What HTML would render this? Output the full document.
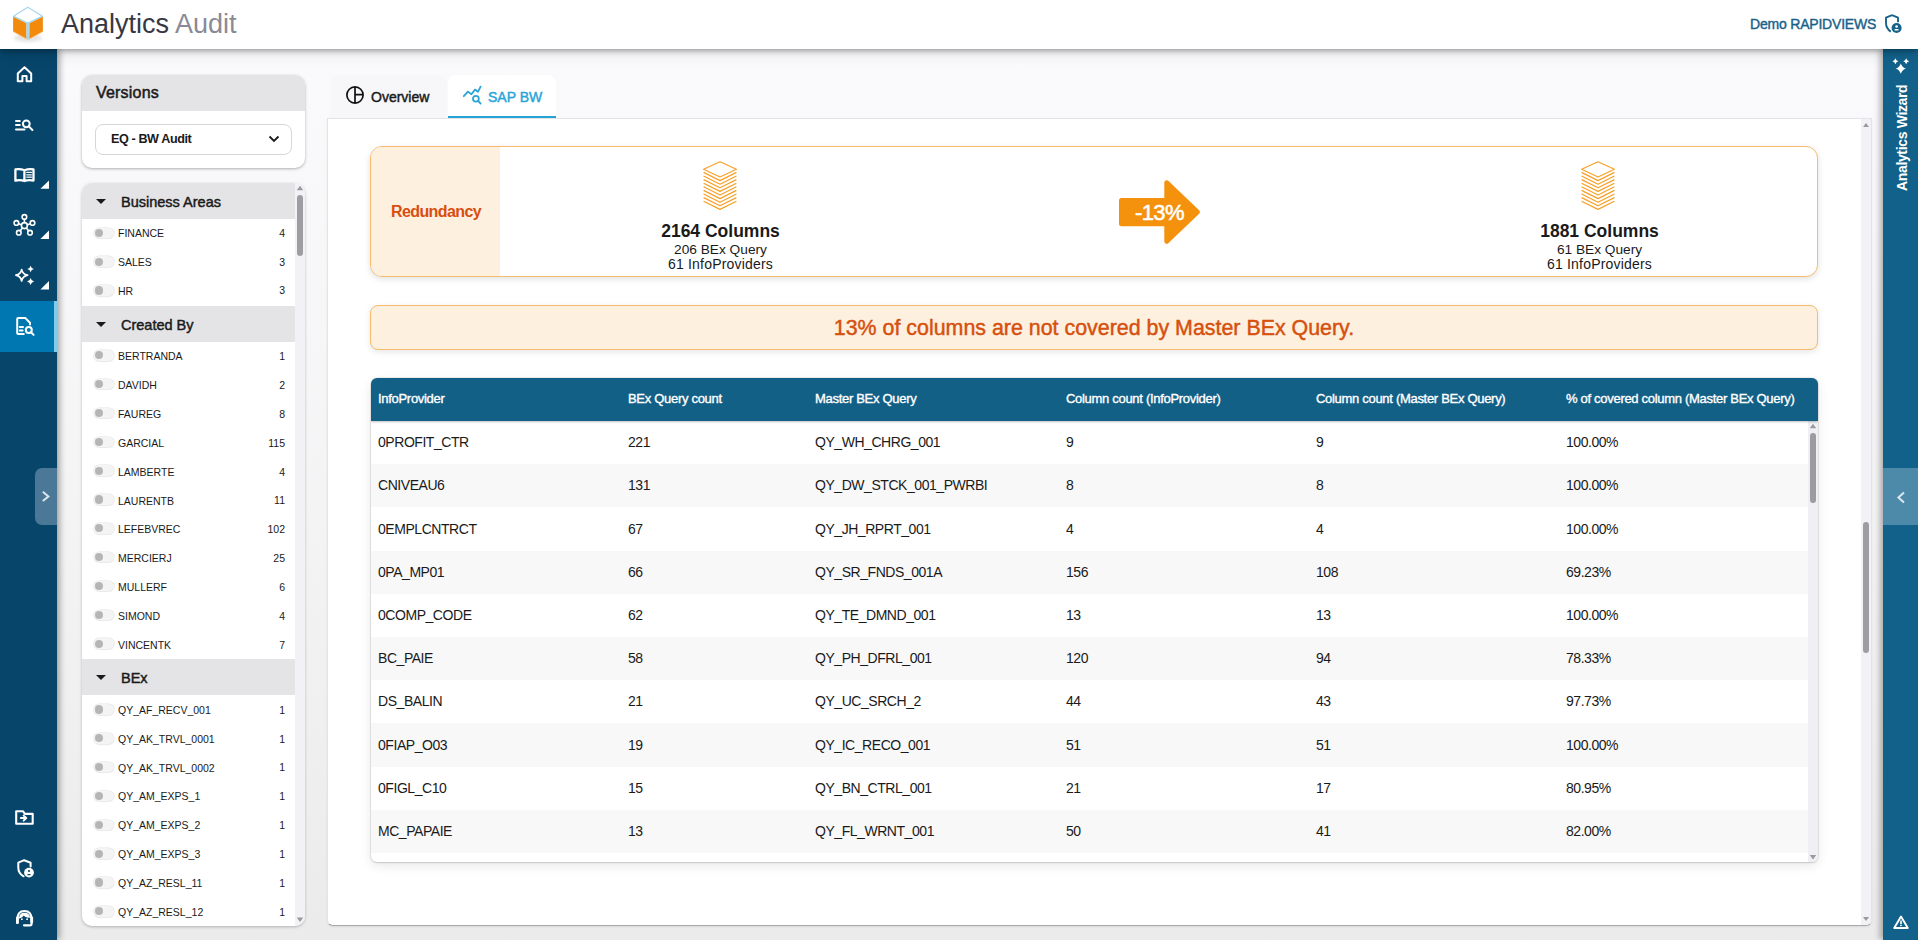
<!DOCTYPE html>
<html><head><meta charset="utf-8">
<style>
*{box-sizing:border-box;margin:0;padding:0}
html,body{width:1918px;height:940px;overflow:hidden;font-family:"Liberation Sans",sans-serif;background:linear-gradient(#fafafc 60px,#f4f4f5 500px,#ebebeb 940px);color:#1a1a1a}
.abs{position:absolute}
#hdr{position:absolute;left:0;top:0;width:1918px;height:49px;background:#fff;box-shadow:0 2px 5px rgba(0,0,0,.3),0 4px 14px rgba(0,0,0,.12);z-index:5}
#lsb{position:absolute;left:0;top:49px;width:57px;height:891px;background:#07456a;z-index:4;box-shadow:2px 0 7px rgba(0,0,0,.4)}
#rsb{position:absolute;left:1883px;top:49px;width:35px;height:891px;background:#12618a;z-index:4;box-shadow:-3px 0 6px rgba(0,0,0,.3)}
.card{position:absolute;background:#fff;border-radius:10px;box-shadow:0 1px 3px rgba(0,0,0,.3)}
.ico{position:absolute;left:14px;width:22px;height:22px}
.ico svg{width:22px;height:22px;display:block}
.corner{position:absolute;width:0;height:0;border-left:9px solid transparent;border-bottom:9px solid #fff}
/* facets */
#fac{position:absolute;left:82px;top:183px;width:223px;height:743px;background:#fff;border-radius:10px;box-shadow:0 1px 3px rgba(0,0,0,.25);overflow:hidden}
.fh{position:relative;width:213px;height:36px;background:#e4e4e6;font-size:14.5px;-webkit-text-stroke:0.45px #1a1a1a;padding:11px 0 0 39px;color:#1a1a1a}
.car{position:absolute;left:14px;top:16px;width:0;height:0;border-left:5px solid transparent;border-right:5px solid transparent;border-top:5px solid #1a1a1a}
.fr{position:relative;width:213px;height:28.85px;font-size:10.5px;color:#1a1a1a}
.s2 .fn,.s2 .fc{margin-top:0.8px}
.s3 .fn,.s3 .fc{margin-top:1.1px}
.s3 .tg{margin-top:0.9px}
.tg{position:absolute;left:12px;top:8.5px;width:20px;height:10.5px;border-radius:5.25px;background:#f4f4f4;box-shadow:0 0 0 0.6px #e4e4e4,0 1px 1px rgba(0,0,0,.06)}
.tg:before{content:"";position:absolute;left:1px;top:1.2px;width:8.2px;height:8.2px;border-radius:50%;background:#b5b5b5}
.fn{position:absolute;left:36px;top:8px}
.fc{position:absolute;right:10px;top:7.8px}
/* tabs */
.tab{position:absolute;top:75px;height:43px;font-size:14px;-webkit-text-stroke:0.45px currentColor}
/* table */
#tbl{position:absolute;left:371px;top:378px;width:1447px;height:484px;background:#fff;border-radius:6px;box-shadow:0 4px 12px rgba(0,0,0,.09),0 1px 2px rgba(0,0,0,.12),0 0 0 1px rgba(0,0,0,.06);overflow:hidden}
.th{position:absolute;left:0;top:0;width:1447px;height:43px;box-shadow:0 1px 2px rgba(0,0,0,.25);z-index:2;background:#136087;color:#fff;font-size:13px;letter-spacing:-0.3px;-webkit-text-stroke:0.35px #fff}
.th span{position:absolute;top:12.6px}
.tr{position:relative;width:1437px;height:43.2px;font-size:14px;letter-spacing:-0.45px;background:#fff}
.tr.alt{background:#f8f8f9}
.tr span{position:absolute;top:13.2px;white-space:nowrap}
.th span{white-space:nowrap}
.c1{left:7px}.c2{left:257px}.c3{left:444px}.c4{left:695px}.c5{left:945px}.c6{left:1195px}
</style></head>
<body>
<div id="hdr">
  <svg class="abs" style="left:0;top:0" width="60" height="49" viewBox="0 0 60 49">
    <defs><filter id="sh" x="-30%" y="-30%" width="160%" height="160%"><feGaussianBlur stdDeviation="1.6"/></filter></defs>
    <ellipse cx="28" cy="38" rx="14" ry="4" fill="rgba(0,0,0,.10)" filter="url(#sh)"/>
    <polygon points="13.1,16.2 26.5,23.3 26.5,39.6 13.1,31.8" fill="#f28b0c"/>
    <polygon points="42.9,16.2 29.3,23.3 29.3,39.6 42.9,31.8" fill="#f28b0c"/>
    <rect x="26.5" y="22.8" width="2.8" height="16.8" fill="#a6d8ef"/>
    <polygon points="27.8,7.3 42.6,16.2 27.8,23.2 13.4,16.2" fill="#fff" stroke="#a6d8ef" stroke-width="1.3" stroke-linejoin="round"/>
    <polyline points="13.6,31.8 27,39.4" stroke="#fbd2a0" stroke-width="1" fill="none"/>
    <polyline points="29,39.4 42.6,31.8" stroke="#fbd2a0" stroke-width="1" fill="none"/>
  </svg>
  <div class="abs" style="left:61px;top:8px;font-size:27px;line-height:32px;color:#383844">Analytics <span style="color:#8a8a96">Audit</span></div>
  <div class="abs" style="left:1750px;top:16px;font-size:14px;line-height:16px;-webkit-text-stroke:0.4px #17628a;letter-spacing:-0.2px;color:#17628a">Demo RAPIDVIEWS</div>
  <svg class="abs" style="left:1879px;top:10px" width="26" height="26" viewBox="1880 10 26 26">
    <path d="M1893,15.2 L1899,17.6 V22.3 M1891.8,31.6 C1888.6,29.6 1887,26.8 1887,23 V17.6 L1893,15.2" fill="none" stroke="#17628a" stroke-width="1.9" stroke-linejoin="round"/>
    <circle cx="1897.6" cy="28" r="5" fill="#17628a"/>
    <circle cx="1897.6" cy="26.5" r="1.3" fill="#fff"/>
    <rect x="1895.6" y="29" width="4" height="1.6" rx=".6" fill="#fff"/>
  </svg>
</div>

<div id="lsb">
  <div class="abs" style="left:0;top:252px;width:57px;height:51px;background:#0077b0;border-right:3px solid #80cde9"></div>
  <div class="abs" style="left:35px;top:419px;width:22px;height:57px;background:#4a7896;border-radius:7px 0 0 7px"></div>
  <svg class="abs" style="left:0;top:0" width="57" height="891" viewBox="0 49 57 891">
   <g fill="none" stroke="#fff" stroke-width="2" stroke-linejoin="round" stroke-linecap="round">
    <!-- home -->
    <path d="M17.8,73.5 L24.5,67.3 L31.2,73.5 V81.3 H26.6 V76 H22.4 V81.3 H17.8 Z"/>
    <!-- search list -->
    <path d="M16,121.1 H19.8 M16,124.9 H19.8 M16,129.6 H24.5" stroke-width="2"/>
    <circle cx="26.3" cy="123.8" r="3.4"/>
    <path d="M28.8,126.4 L32.4,130"/>
    <!-- book -->
    <path d="M15.4,169.4 Q20,168.4 24.4,170.3 Q29,168.4 33.5,169.4 V180.6 Q29,179.4 24.4,181 Q20,179.4 15.4,180.6 Z M24.4,170.3 V181" stroke-width="2.3"/>
    <path d="M26.8,172.4 H31.4 M26.8,174.8 H31.4 M26.8,177.2 H31.4" stroke-width="1.3"/>
    <!-- network -->
    <g stroke-width="1.6">
     <circle cx="24.4" cy="225.6" r="3"/>
     <circle cx="24.4" cy="216.9" r="2.3"/>
     <circle cx="16.4" cy="222.9" r="2.3"/>
     <circle cx="32.5" cy="222.9" r="2.3"/>
     <circle cx="18.8" cy="232.7" r="2.3"/>
     <circle cx="30" cy="232.7" r="2.3"/>
     <path d="M24.4,219.2 V222.6 M18.6,223.7 L21.5,224.7 M30.3,223.7 L27.3,224.7 M20.2,230.8 L22.5,228 M28.6,230.8 L26.3,228"/>
    </g>
    <!-- sparkles -->
    <path d="M21.65,269.6 Q22.6,274.2 27.6,275.2 Q22.6,276.2 21.65,281 Q20.7,276.2 15.9,275.2 Q20.7,274.2 21.65,269.6 Z" stroke-width="1.7"/>
   </g>
   <g fill="#fff">
    <path d="M30.6,265.8 Q31.1,268.5 34,269 Q31.1,269.5 30.6,272.2 Q30.1,269.5 27.2,269 Q30.1,268.5 30.6,265.8 Z"/>
    <path d="M30.6,278 Q31.2,280.9 34.1,281.5 Q31.2,282.1 30.6,285 Q30,282.1 27.1,281.5 Q30,280.9 30.6,278 Z"/>
    <polygon points="40.4,188.8 49,180.4 49,188.8"/>
    <polygon points="40.4,238.9 49,230.5 49,238.9"/>
    <polygon points="40.4,289.5 49,281 49,289.5"/>
   </g>
   <g fill="none" stroke="#fff" stroke-width="2" stroke-linejoin="round" stroke-linecap="round">
    <!-- doc search -->
    <path d="M23.8,333.9 H18.1 Q17.2,333.9 17.2,333 V319 Q17.2,318.1 18.1,318.1 H25.4 L30,322.8 V324.5"/>
    <path d="M19.8,327 H23 M19.8,330.4 H22.6"/>
    <circle cx="28.8" cy="330" r="3"/>
    <path d="M31,332.3 L33.6,334.9"/>
    <!-- folder -->
    <path d="M16.2,811.3 H23.1 L24.8,813.9 H32.7 V823.7 H16.2 Z" stroke-width="2.1"/>
    <path d="M20.8,818 H26.3 M23.6,815.6 L26.3,818 L23.6,820.6" stroke-width="1.9"/>
    <!-- shield -->
    <path d="M24.2,860.2 L30.6,862.7 V866.6 M23.6,876.3 C20.2,874.4 18.3,871.3 18.3,867.4 V862.7 L24.2,860.2"/>
    <!-- headset -->
    <path d="M17.4,922.5 V919.5 Q17.4,911 24.4,911 Q31.6,911 31.6,919.5 V923.5 Q31.6,925.3 30,925.3 H24" stroke-width="2.2"/>
    <path d="M19.6,918 Q20,913.4 24.4,913.4 Q28.8,913.4 29.4,917.2 Q25.4,917 23.6,914.4 Q22,917.6 19.6,918 Z" fill="#fff" stroke-width="1.2"/>
   </g>
   <circle cx="29" cy="872.6" r="4.9" fill="#fff"/>
   <circle cx="29" cy="871" r="1.1" fill="#07456a"/>
   <rect x="27.4" y="873.9" width="3.2" height="1.3" rx=".5" fill="#07456a"/>
   <rect x="16" y="916.5" width="2.8" height="7.5" rx="1" fill="#fff"/>
   <rect x="30.3" y="916.5" width="2.8" height="6.5" rx="1" fill="#fff"/>
   <circle cx="21.9" cy="919.2" r=".9" fill="#fff"/>
   <circle cx="27.1" cy="919.2" r=".9" fill="#fff"/>
   <!-- collapse chevron -->
   <path d="M42.8,491.8 L48.4,496.4 L42.8,501" fill="none" stroke="#dde6ec" stroke-width="2"/>
  </svg>
</div>
<div id="rsb">
  <div class="abs" style="left:0;top:419px;width:35px;height:57px;background:#4d8aa9"></div>
  <div class="abs" style="white-space:nowrap;transform:rotate(-90deg);transform-origin:0 0;font-size:14px;line-height:16px;font-weight:bold;letter-spacing:-0.35px;color:#fff;left:11px;top:142px">Analytics Wizard</div>
  <svg class="abs" style="left:0;top:0" width="35" height="891" viewBox="1883 49 35 891">
   <g fill="#fff">
    <path d="M1900.80,63.40 Q1902.10,67.30 1906.00,68.60 Q1902.10,69.90 1900.80,73.80 Q1899.50,69.90 1895.60,68.60 Q1899.50,67.30 1900.80,63.40 Z"/>
    <path d="M1895.40,58.20 Q1896.06,60.54 1898.40,61.20 Q1896.06,61.86 1895.40,64.20 Q1894.74,61.86 1892.40,61.20 Q1894.74,60.54 1895.40,58.20 Z"/>
    <path d="M1906.20,58.20 Q1906.86,60.54 1909.20,61.20 Q1906.86,61.86 1906.20,64.20 Q1905.54,61.86 1903.20,61.20 Q1905.54,60.54 1906.20,58.20 Z"/>
    <path d="M1901,916.5 L1907.8,928 H1894.2 Z" fill="none" stroke="#fff" stroke-width="1.9" stroke-linejoin="round"/>
    <rect x="1900.2" y="920.5" width="1.6" height="3.6" />
    <rect x="1900.2" y="924.8" width="1.6" height="1.4" />
   </g>
   <path d="M1904,492.6 L1898.4,497.6 L1904,502.6" fill="none" stroke="#dde8ee" stroke-width="2"/>
  </svg>
</div>

<!-- versions -->
<div class="card" style="left:82px;top:75px;width:223px;height:93px;overflow:hidden">
  <div style="height:36px;background:#e4e4e6;padding:9px 0 0 14px;font-size:16px;-webkit-text-stroke:0.5px #1a1a1a;letter-spacing:0.2px">Versions</div>
  <div class="abs" style="left:13px;top:49px;width:197px;height:31px;border:1px solid #d6d6d6;border-radius:8px;font-size:12.6px;font-weight:bold;letter-spacing:-0.4px;padding:7px 0 0 15px">EQ - BW Audit
    <svg class="abs" style="left:172px;top:10px" width="12" height="8" viewBox="0 0 12 8"><polyline points="1.5,1.5 6,6 10.5,1.5" fill="none" stroke="#1a1a1a" stroke-width="1.8"/></svg>
  </div>
</div>

<!-- facets -->
<div id="fac">
<div class="fh"><i class="car"></i>Business Areas</div>
<div class="s1">
<div class="fr"><i class="tg"></i><span class="fn">FINANCE</span><span class="fc">4</span></div>
<div class="fr"><i class="tg"></i><span class="fn">SALES</span><span class="fc">3</span></div>
<div class="fr"><i class="tg"></i><span class="fn">HR</span><span class="fc">3</span></div>
</div>
<div class="fh"><i class="car"></i>Created By</div>
<div class="s2">
<div class="fr"><i class="tg"></i><span class="fn">BERTRANDA</span><span class="fc">1</span></div>
<div class="fr"><i class="tg"></i><span class="fn">DAVIDH</span><span class="fc">2</span></div>
<div class="fr"><i class="tg"></i><span class="fn">FAUREG</span><span class="fc">8</span></div>
<div class="fr"><i class="tg"></i><span class="fn">GARCIAL</span><span class="fc">115</span></div>
<div class="fr"><i class="tg"></i><span class="fn">LAMBERTE</span><span class="fc">4</span></div>
<div class="fr"><i class="tg"></i><span class="fn">LAURENTB</span><span class="fc">11</span></div>
<div class="fr"><i class="tg"></i><span class="fn">LEFEBVREC</span><span class="fc">102</span></div>
<div class="fr"><i class="tg"></i><span class="fn">MERCIERJ</span><span class="fc">25</span></div>
<div class="fr"><i class="tg"></i><span class="fn">MULLERF</span><span class="fc">6</span></div>
<div class="fr"><i class="tg"></i><span class="fn">SIMOND</span><span class="fc">4</span></div>
<div class="fr"><i class="tg"></i><span class="fn">VINCENTK</span><span class="fc">7</span></div>
</div>
<div class="fh"><i class="car"></i>BEx</div>
<div class="s3">
<div class="fr"><i class="tg"></i><span class="fn">QY_AF_RECV_001</span><span class="fc">1</span></div>
<div class="fr"><i class="tg"></i><span class="fn">QY_AK_TRVL_0001</span><span class="fc">1</span></div>
<div class="fr"><i class="tg"></i><span class="fn">QY_AK_TRVL_0002</span><span class="fc">1</span></div>
<div class="fr"><i class="tg"></i><span class="fn">QY_AM_EXPS_1</span><span class="fc">1</span></div>
<div class="fr"><i class="tg"></i><span class="fn">QY_AM_EXPS_2</span><span class="fc">1</span></div>
<div class="fr"><i class="tg"></i><span class="fn">QY_AM_EXPS_3</span><span class="fc">1</span></div>
<div class="fr"><i class="tg"></i><span class="fn">QY_AZ_RESL_11</span><span class="fc">1</span></div>
<div class="fr"><i class="tg"></i><span class="fn">QY_AZ_RESL_12</span><span class="fc">1</span></div>
</div>

  <div class="abs" style="left:213px;top:0;width:10px;height:743px;background:#f2f1f6"></div>
  <div class="abs" style="left:215px;top:12px;width:6px;height:61px;border-radius:3px;background:#9e9da2"></div>
  <svg class="abs" style="left:213px;top:0" width="10" height="743" viewBox="0 0 10 743"><path d="M1.8,7.2 L5,2.7 L8.2,7.2 Z M1.8,734.5 L5,739 L8.2,734.5 Z" fill="#9a9a9e"/></svg>
</div>

<!-- tabs -->
<div class="tab" style="left:330px;width:117px;background:#f7f7f9;border-radius:8px 8px 0 0;padding:0;">
  <span class="abs" style="left:41px;top:14px;line-height:16px">Overview</span>
  <svg class="abs" style="left:14px;top:9px" width="22" height="22" viewBox="344 84 22 22">
    <circle cx="355" cy="95" r="8.1" fill="none" stroke="#111" stroke-width="1.7"/>
    <path d="M355,87 V103 M355,94.6 H363" stroke="#111" stroke-width="1.7"/>
  </svg>
</div>
<div class="tab" style="left:448px;width:108px;background:#fff;border-radius:8px 8px 0 0;border-bottom:2px solid #28a3d6;color:#2aa5d8;padding:0">
  <span class="abs" style="left:40px;top:14px;line-height:16px">SAP BW</span>
  <svg class="abs" style="left:13px;top:9px" width="22" height="22" viewBox="461 84 22 22">
    <path d="M463.8,96.2 L468,91.6 L471.4,94.2 L475,89.6 L478,91.8 L480.6,86.6" fill="none" stroke="#2aa5d8" stroke-width="1.8" stroke-linejoin="round" stroke-linecap="round"/>
    <circle cx="475.9" cy="98.8" r="2.9" fill="none" stroke="#2aa5d8" stroke-width="1.8"/>
    <path d="M478,100.9 L480.6,103.5" stroke="#2aa5d8" stroke-width="1.8" stroke-linecap="round"/>
  </svg>
</div>

<!-- content card -->
<div class="abs" style="left:327px;top:118px;width:1545px;height:808px;background:#fff;border:1px solid #e3e3e8;border-bottom:1.5px solid #a9a9ad;border-radius:0 0 6px 6px;overflow:hidden;box-shadow:0 1px 2px rgba(0,0,0,.08)">
  <div class="abs" style="left:1533px;top:0;width:10px;height:806px;background:#f2f1f6"></div>
  <div class="abs" style="left:1535px;top:403px;width:6px;height:131px;border-radius:3px;background:#9e9da2"></div>
  <svg class="abs" style="left:1533px;top:0" width="10" height="806" viewBox="0 0 10 806"><path d="M2,8 L5,4 L8,8 Z M2,798 L5,802 L8,798 Z" fill="#9a9a9e"/></svg>
</div>

<!-- redundancy -->
<div class="abs" style="left:370px;top:146px;width:1448px;height:131px;background:#fff;border:1px solid #f6bb6c;border-radius:12px;box-shadow:0 2px 6px rgba(0,0,0,.12);overflow:hidden">
  <div class="abs" style="left:0;top:0;width:129px;height:129px;background:#fdf0df"></div>
  <div class="abs" style="left:20px;top:56px;font-size:16px;font-weight:bold;letter-spacing:-0.6px;color:#d84e10">Redundancy</div>
  <svg class="abs" style="left:332px;top:14px" width="36" height="52" viewBox="703 161 36 52">
      <g fill="none" stroke="#f7a12a" stroke-width="1.25" stroke-linejoin="round">
       <polygon points="720,161.8 736.4,169.2 720,177 703.6,169.2"/>
       <polyline points="703.6,172.4 720,180.6 736.4,172.4"/><polyline points="703.6,176.0 720,184.2 736.4,176.0"/><polyline points="703.6,179.6 720,187.8 736.4,179.6"/><polyline points="703.6,183.2 720,191.4 736.4,183.2"/><polyline points="703.6,186.8 720,195.0 736.4,186.8"/><polyline points="703.6,190.4 720,198.6 736.4,190.4"/><polyline points="703.6,194.0 720,202.2 736.4,194.0"/><polyline points="703.6,197.6 720,205.8 736.4,197.6"/><polyline points="703.6,201.2 720,209.4 736.4,201.2"/>
      </g></svg>
  <svg class="abs" style="left:1210px;top:14px" width="36" height="52" viewBox="703 161 36 52">
      <g fill="none" stroke="#f7a12a" stroke-width="1.25" stroke-linejoin="round">
       <polygon points="720,161.8 736.4,169.2 720,177 703.6,169.2"/>
       <polyline points="703.6,172.4 720,180.6 736.4,172.4"/><polyline points="703.6,176.0 720,184.2 736.4,176.0"/><polyline points="703.6,179.6 720,187.8 736.4,179.6"/><polyline points="703.6,183.2 720,191.4 736.4,183.2"/><polyline points="703.6,186.8 720,195.0 736.4,186.8"/><polyline points="703.6,190.4 720,198.6 736.4,190.4"/><polyline points="703.6,194.0 720,202.2 736.4,194.0"/><polyline points="703.6,197.6 720,205.8 736.4,197.6"/><polyline points="703.6,201.2 720,209.4 736.4,201.2"/>
      </g></svg>
  <svg class="abs" style="left:747px;top:32px" width="84" height="66" viewBox="1118 179 84 66">
    <polygon points="1121.5,200.5 1166.8,200.5 1166.8,182.8 1197.4,212 1166.8,241.2 1166.8,223.8 1121.5,223.8" fill="#f4910d" stroke="#f4910d" stroke-width="5" stroke-linejoin="round"/>
  </svg>
  <div class="abs" style="left:764px;top:53.5px;font-size:22px;line-height:24px;-webkit-text-stroke:0.55px #fff;color:#fff;letter-spacing:-0.6px">-13%</div>
  <div class="abs" style="left:130px;top:0;width:439px;text-align:center;">
    <div style="position:absolute;left:0;top:74px;width:439px;font-size:17.5px;font-weight:bold">2164 Columns</div>
    <div style="position:absolute;left:0;top:95px;width:439px;font-size:13.7px;line-height:15px">206 BEx Query<br><span style="font-size:14px;letter-spacing:0.2px">61 InfoProviders</span></div>
  </div>
  <div class="abs" style="left:1009px;top:0;width:439px;text-align:center;">
    <div style="position:absolute;left:0;top:74px;width:439px;font-size:17.5px;font-weight:bold">1881 Columns</div>
    <div style="position:absolute;left:0;top:95px;width:439px;font-size:13.7px;line-height:15px">61 BEx Query<br><span style="font-size:14px;letter-spacing:0.2px">61 InfoProviders</span></div>
  </div>
</div>

<!-- message -->
<div class="abs" style="left:370px;top:305px;width:1448px;height:45px;background:#fdf0df;border:1px solid #f6bb6c;border-radius:8px;box-shadow:0 2px 6px rgba(0,0,0,.1);text-align:center;font-size:21.4px;color:#d6500e;-webkit-text-stroke:0.45px #d6500e;padding-top:10px">13% of columns are not covered by Master BEx Query.</div>

<!-- table -->
<div id="tbl">
  <div class="th"><span class="c1">InfoProvider</span><span class="c2">BEx Query count</span><span class="c3">Master BEx Query</span><span class="c4">Column count (InfoProvider)</span><span class="c5">Column count (Master BEx Query)</span><span class="c6">% of covered column (Master BEx Query)</span></div>
  <div class="abs" style="left:0;top:43px;width:1437px">
<div class="tr"><span class="c1">0PROFIT_CTR</span><span class="c2">221</span><span class="c3">QY_WH_CHRG_001</span><span class="c4">9</span><span class="c5">9</span><span class="c6">100.00%</span></div>
<div class="tr alt"><span class="c1">CNIVEAU6</span><span class="c2">131</span><span class="c3">QY_DW_STCK_001_PWRBI</span><span class="c4">8</span><span class="c5">8</span><span class="c6">100.00%</span></div>
<div class="tr"><span class="c1">0EMPLCNTRCT</span><span class="c2">67</span><span class="c3">QY_JH_RPRT_001</span><span class="c4">4</span><span class="c5">4</span><span class="c6">100.00%</span></div>
<div class="tr alt"><span class="c1">0PA_MP01</span><span class="c2">66</span><span class="c3">QY_SR_FNDS_001A</span><span class="c4">156</span><span class="c5">108</span><span class="c6">69.23%</span></div>
<div class="tr"><span class="c1">0COMP_CODE</span><span class="c2">62</span><span class="c3">QY_TE_DMND_001</span><span class="c4">13</span><span class="c5">13</span><span class="c6">100.00%</span></div>
<div class="tr alt"><span class="c1">BC_PAIE</span><span class="c2">58</span><span class="c3">QY_PH_DFRL_001</span><span class="c4">120</span><span class="c5">94</span><span class="c6">78.33%</span></div>
<div class="tr"><span class="c1">DS_BALIN</span><span class="c2">21</span><span class="c3">QY_UC_SRCH_2</span><span class="c4">44</span><span class="c5">43</span><span class="c6">97.73%</span></div>
<div class="tr alt"><span class="c1">0FIAP_O03</span><span class="c2">19</span><span class="c3">QY_IC_RECO_001</span><span class="c4">51</span><span class="c5">51</span><span class="c6">100.00%</span></div>
<div class="tr"><span class="c1">0FIGL_C10</span><span class="c2">15</span><span class="c3">QY_BN_CTRL_001</span><span class="c4">21</span><span class="c5">17</span><span class="c6">80.95%</span></div>
<div class="tr alt"><span class="c1">MC_PAPAIE</span><span class="c2">13</span><span class="c3">QY_FL_WRNT_001</span><span class="c4">50</span><span class="c5">41</span><span class="c6">82.00%</span></div>

  </div>
  <div class="abs" style="left:1437px;top:43px;width:10px;height:441px;background:#f0eff4"></div>
  <div class="abs" style="left:1439px;top:55px;width:6px;height:70px;border-radius:3px;background:#9c9ba0"></div>
  <svg class="abs" style="left:1437px;top:43px" width="10" height="441" viewBox="0 0 10 441"><path d="M1.8,7.2 L5,2.7 L8.2,7.2 Z M1.8,434 L5,438.5 L8.2,434 Z" fill="#9a9a9e"/></svg>
</div>
</body></html>
